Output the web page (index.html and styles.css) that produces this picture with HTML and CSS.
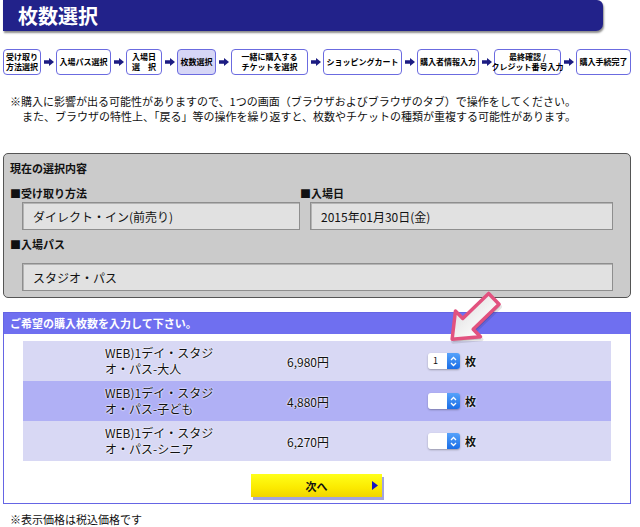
FILE: index.html
```html
<!DOCTYPE html>
<html lang="ja">
<head>
<meta charset="utf-8">
<title>枚数選択</title>
<link rel="stylesheet" href="styles.css">
</head>
<body>
<div class="page">
  <header class="title-bar"><h1 class="title">枚数選択</h1></header>

  <nav class="steps">
    <div class="step s1">受け取り<br>方法選択</div>
    <span class="step-arrow"><svg width="10" height="8" viewBox="0 0 10 8"><path d="M0 2.3H5V0L10 4L5 8V5.7H0Z"/></svg></span>
    <div class="step s2">入場パス選択</div>
    <span class="step-arrow"><svg width="10" height="8" viewBox="0 0 10 8"><path d="M0 2.3H5V0L10 4L5 8V5.7H0Z"/></svg></span>
    <div class="step s3">入場日<br>選　択</div>
    <span class="step-arrow"><svg width="10" height="8" viewBox="0 0 10 8"><path d="M0 2.3H5V0L10 4L5 8V5.7H0Z"/></svg></span>
    <div class="step s4 active">枚数選択</div>
    <span class="step-arrow"><svg width="10" height="8" viewBox="0 0 10 8"><path d="M0 2.3H5V0L10 4L5 8V5.7H0Z"/></svg></span>
    <div class="step s5">一緒に購入する<br>チケットを選択</div>
    <span class="step-arrow"><svg width="10" height="8" viewBox="0 0 10 8"><path d="M0 2.3H5V0L10 4L5 8V5.7H0Z"/></svg></span>
    <div class="step s6">ショッピングカート</div>
    <span class="step-arrow"><svg width="10" height="8" viewBox="0 0 10 8"><path d="M0 2.3H5V0L10 4L5 8V5.7H0Z"/></svg></span>
    <div class="step s7">購入者情報入力</div>
    <span class="step-arrow"><svg width="10" height="8" viewBox="0 0 10 8"><path d="M0 2.3H5V0L10 4L5 8V5.7H0Z"/></svg></span>
    <div class="step s8">最終確認 /<br>クレジット番号入力</div>
    <span class="step-arrow"><svg width="10" height="8" viewBox="0 0 10 8"><path d="M0 2.3H5V0L10 4L5 8V5.7H0Z"/></svg></span>
    <div class="step s9">購入手続完了</div>
  </nav>

  <div class="notice">
    <p class="notice-line">※購入に影響が出る可能性がありますので、1つの画面（ブラウザおよびブラウザのタブ）で操作をしてください。</p>
    <p class="notice-line indent">また、ブラウザの特性上、「戻る」等の操作を繰り返すと、枚数やチケットの種類が重複する可能性があります。</p>
  </div>

  <section class="summary">
    <h2 class="summary-title">現在の選択内容</h2>
    <div class="summary-grid">
      <div class="field">
        <div class="field-label">■受け取り方法</div>
        <div class="field-box">ダイレクト・イン(前売り)</div>
      </div>
      <div class="field right">
        <div class="field-label">■入場日</div>
        <div class="field-box">2015年01月30日(金)</div>
      </div>
      <div class="field wide">
        <div class="field-label">■入場パス</div>
        <div class="field-box">スタジオ・パス</div>
      </div>
    </div>
  </section>

  <section class="purchase">
    <h2 class="purchase-title">ご希望の購入枚数を入力して下さい。</h2>
    <div class="ticket-list">
      <div class="ticket-row">
        <div class="ticket-name">WEB)1デイ・スタジ<br>オ・パス-大人</div>
        <div class="ticket-price">6,980円</div>
        <div class="ticket-qty">
          <span class="select"><span class="select-value">1</span><span class="select-btn"><svg width="7" height="11" viewBox="0 0 7 11"><path d="M1 4L3.5 1.5L6 4M1 7L3.5 9.5L6 7"/></svg></span></span>
          <span class="unit">枚</span>
        </div>
      </div>
      <div class="ticket-row alt">
        <div class="ticket-name">WEB)1デイ・スタジ<br>オ・パス-子ども</div>
        <div class="ticket-price">4,880円</div>
        <div class="ticket-qty">
          <span class="select"><span class="select-value"></span><span class="select-btn"><svg width="7" height="11" viewBox="0 0 7 11"><path d="M1 4L3.5 1.5L6 4M1 7L3.5 9.5L6 7"/></svg></span></span>
          <span class="unit">枚</span>
        </div>
      </div>
      <div class="ticket-row">
        <div class="ticket-name">WEB)1デイ・スタジ<br>オ・パス-シニア</div>
        <div class="ticket-price">6,270円</div>
        <div class="ticket-qty">
          <span class="select"><span class="select-value"></span><span class="select-btn"><svg width="7" height="11" viewBox="0 0 7 11"><path d="M1 4L3.5 1.5L6 4M1 7L3.5 9.5L6 7"/></svg></span></span>
          <span class="unit">枚</span>
        </div>
      </div>
    </div>
    <div class="actions">
      <button class="next-btn" type="button"><span class="next-label">次へ</span><svg class="next-tri" width="6" height="9" viewBox="0 0 6 9"><path d="M0 0L6 4.5L0 9Z"/></svg></button>
    </div>
  </section>

  <p class="footnote">※表示価格は税込価格です</p>

  <svg class="pointer-arrow" width="68" height="60" viewBox="0 0 68 60">
    <defs>
      <linearGradient id="arrowFill" x1="0" y1="0" x2="0" y2="1">
        <stop offset="0" stop-color="#ffffff"/>
        <stop offset="1" stop-color="#e2e2e2"/>
      </linearGradient>
    </defs>
    <g transform="translate(34 30) rotate(136)">
      <path class="pointer-shadow" d="M-29 -7.5H7V-18L29 0L7 18V7.5H-29Z" transform="translate(1 -2.5)"/>
      <path class="pointer-body" d="M-29 -7.5H7V-18L29 0L7 18V7.5H-29Z"/>
    </g>
  </svg>
</div>
</body>
</html>
```

FILE: styles.css
```css
* { box-sizing: border-box; }

html, body {
  margin: 0;
  padding: 0;
  background: #ffffff;
}

body {
  font-family: "Noto Sans CJK JP", "Noto Sans", "Liberation Sans", sans-serif;
  color: #111111;
  font-size: 11px;
}

.page {
  position: relative;
  width: 640px;
  height: 527px;
  overflow: hidden;
}

/* Title bar */
.title-bar {
  margin-left: 3px;
  width: 600px;
  height: 31px;
  background: #22228a;
  border-radius: 0 6px 7px 0;
  box-shadow: 1px 2px 2px rgba(0, 0, 0, 0.45);
  display: flex;
  align-items: center;
  padding-left: 15px;
}

.title {
  margin: 0;
  color: #ffffff;
  font-size: 20px;
  font-weight: 700;
  line-height: 1;
  letter-spacing: 0;
}

/* Steps */
.steps {
  display: flex;
  align-items: center;
  margin: 18px 0 0 3px;
  height: 26px;
}

.step {
  height: 26px;
  border: 1px solid #6b6be0;
  border-radius: 4px;
  background: #ffffff;
  display: flex;
  align-items: center;
  justify-content: center;
  text-align: center;
  font-size: 8px;
  font-weight: 700;
  line-height: 10px;
  white-space: nowrap;
  color: #000000;
}

.step.active { background: #d6d6f6; }

.s1 { width: 38px; justify-content: flex-start; text-align: left; padding-left: 2px; }
.s2 { width: 55px; }
.s3 { width: 36px; }
.s4 { width: 39px; }
.s5 { width: 77px; }
.s6 { width: 79px; }
.s7 { width: 62px; }
.s8 { width: 67px; }
.s9 { width: 55px; }

.step-arrow {
  width: 15px;
  display: flex;
  justify-content: center;
  align-items: center;
}

.step-arrow svg { fill: #1c1c82; display: block; }

/* Notice */
.notice {
  margin: 19px 0 0 10px;
}

.notice-line {
  margin: 0;
  font-size: 11px;
  line-height: 15px;
  white-space: nowrap;
  color: #111111;
}

.notice-line.indent { padding-left: 12px; }

/* Summary */
.summary {
  margin: 29px 0 0 3px;
  width: 628px;
  background: #cbcbcb;
  border: 1px solid #555555;
  border-radius: 5px;
  padding: 7px 17px 6px 6px;
}

.summary-title {
  margin: 0;
  font-size: 11px;
  font-weight: 700;
  line-height: 14px;
}

.summary-grid {
  display: grid;
  grid-template-columns: 290px 1fr;
  margin-top: 11px;
}

.field-label {
  font-size: 11px;
  font-weight: 700;
  line-height: 14px;
  margin-bottom: 2px;
}

.field-box {
  margin-left: 12px;
  height: 28px;
  background: #e1e1e1;
  border: 1px solid #8e8e8e;
  box-shadow: inset 1px 1px 0 #b4b4b4;
  display: flex;
  align-items: center;
  padding-left: 10px;
  font-size: 12px;
  color: #111111;
}

.field.right .field-box { margin-left: 10px; }

.field.wide {
  grid-column: 1 / -1;
  margin-top: 7px;
}

.field.wide .field-label { margin-bottom: 12px; }

/* Purchase */
.purchase {
  margin: 14px 0 0 3px;
  width: 628px;
  border: 1px solid #6565e4;
  padding-bottom: 6px;
}

.purchase-title {
  margin: 0;
  height: 21px;
  background: #6f6ff0;
  color: #ffffff;
  font-size: 11px;
  font-weight: 700;
  line-height: 21px;
  padding-left: 6px;
}

.ticket-list {
  margin: 7px 0 0 19px;
  width: 588px;
}

.ticket-row {
  display: grid;
  grid-template-columns: 82px 182px 141px 1fr;
  align-items: center;
  height: 40px;
  background: #d8d8f4;
  font-size: 12px;
  color: #111111;
  text-shadow: 0 0 2px #ffffff, 0 0 2px #ffffff;
}

.ticket-row.alt { background: #b0b0f5; }

.ticket-name {
  grid-column: 2;
  line-height: 16px;
}

.ticket-price { grid-column: 3; }

.ticket-qty {
  grid-column: 4;
  display: flex;
  align-items: center;
  gap: 5px;
}

.select {
  display: flex;
  width: 32px;
  height: 16px;
  border-radius: 3px;
  box-shadow: 0 1px 2px rgba(0, 0, 0, 0.3);
  overflow: hidden;
  text-shadow: none;
}

.select-value {
  flex: 1;
  background: #ffffff;
  font-size: 9px;
  line-height: 16px;
  padding-left: 5px;
}

.select-btn {
  width: 13px;
  background: linear-gradient(#56a2fb, #1a6ee6);
  display: flex;
  align-items: center;
  justify-content: center;
}

.select-btn svg {
  display: block;
  fill: none;
  stroke: #ffffff;
  stroke-width: 1.3;
}

.unit { font-weight: 700; font-size: 11px; }

.actions {
  display: flex;
  justify-content: flex-start;
  padding-left: 247px;
  margin-top: 13px;
}

.next-btn {
  position: relative;
  width: 131px;
  height: 23px;
  border: none;
  padding: 0;
  background: linear-gradient(#ffff1a, #fbea00 60%, #f2d400);
  box-shadow: 2px 3px 0 #a3a3df;
  font-family: inherit;
  font-size: 11px;
  font-weight: 700;
  color: #111111;
  display: flex;
  align-items: center;
  justify-content: center;
}

.next-tri {
  position: absolute;
  right: 4px;
  top: 7px;
  fill: #1313c4;
}

/* Footnote */
.footnote {
  margin: 7px 0 0 10px;
  font-size: 11px;
  line-height: 16px;
}

/* Pointer arrow overlay */
.pointer-arrow {
  position: absolute;
  left: 439px;
  top: 289px;
}

.pointer-shadow {
  fill: rgba(0, 0, 0, 0.16);
  stroke: rgba(0, 0, 0, 0.1);
  stroke-width: 4;
  stroke-linejoin: round;
}

.pointer-body {
  fill: url(#arrowFill);
  stroke: #e2527f;
  stroke-width: 3.5;
  stroke-linejoin: round;
}
```
